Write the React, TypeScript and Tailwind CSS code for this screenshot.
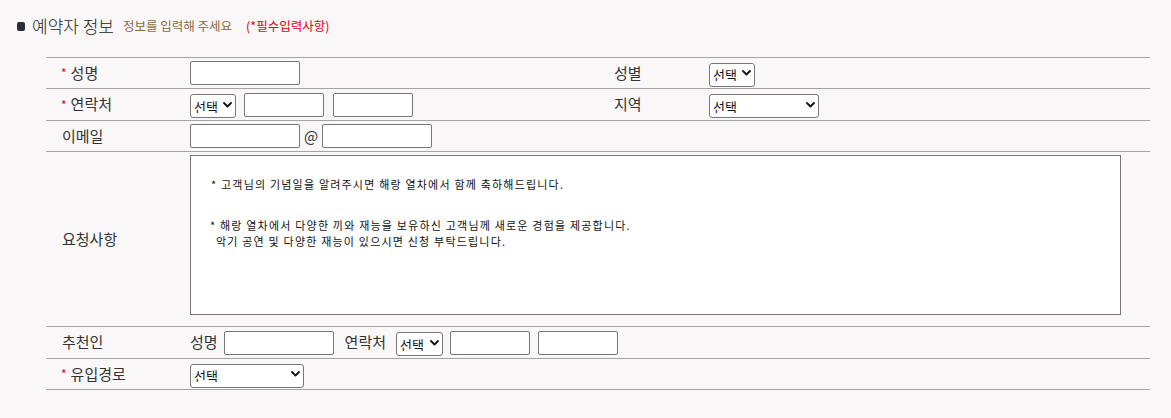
import React from "react";

const FONT = { fontFamily: '"Noto Sans CJK KR", "Noto Sans", sans-serif' };

function Chevron() {
  return (
    <svg width="9" height="6" viewBox="0 0 9 6" className="pointer-events-none absolute right-[4px] top-1/2 -translate-y-1/2">
      <path d="M1 1 L4.5 4.5 L8 1" fill="none" stroke="#111" strokeWidth="1.8" strokeLinecap="round" strokeLinejoin="round" />
    </svg>
  );
}

function Sel({ w }: { w: string }) {
  return (
    <div className={`relative ${w} h-[24px]`}>
      <select
        className="h-full w-full appearance-none rounded-[3px] border border-[#767676] bg-white pl-[3px] text-[13px] leading-none text-[#111] outline-none"
        style={FONT}
        defaultValue="선택"
      >
        <option>선택</option>
      </select>
      <Chevron />
    </div>
  );
}

function Inp({ w }: { w: string }) {
  return <input type="text" className={`${w} h-[24px] rounded-[2px] border border-[#767676] bg-white outline-none`} />;
}

function Label({ req, children }: { req?: boolean; children: React.ReactNode }) {
  return (
    <div className="flex w-[144px] shrink-0 items-center pl-[15px] text-[15px] text-[#333]">
      {req ? <span className="mr-[4px] text-[12px] text-[#e60012]">*</span> : <span className="ml-[1px]" />}
      <span>{children}</span>
    </div>
  );
}

export default function App() {
  return (
    <div className="min-h-[418px] w-full bg-[#f9f7f8] text-[#333]" style={FONT}>
      <div className="flex items-center pl-[17px] pt-[13px]">
        <span className="mr-[7px] h-[9px] w-[8px] rounded-[2px] bg-[#2a2e33]" />
        <span className="text-[17px] font-light leading-[26px] text-[#222]">예약자 정보</span>
        <span className="ml-[9px] text-[12.5px] text-[#8b6a3b]">정보를 입력해 주세요</span>
        <span className="ml-[14px] text-[12.5px] text-[#e8000b]">(*필수입력사항)</span>
      </div>

      <div className="ml-[46px] mt-[18px] w-[1104px] border-t border-[#a3a3a3]">
        {/* row 1 */}
        <div className="flex h-[31px] items-center border-b border-[#a3a3a3]">
          <Label req>성명</Label>
          <div className="flex w-[424px] items-center">
            <Inp w="w-[110px]" />
          </div>
          <div className="w-[95px] text-[15px] text-[#333]">성별</div>
          <Sel w="w-[46px]" />
        </div>
        {/* row 2 */}
        <div className="flex h-[32px] items-center border-b border-[#a3a3a3]">
          <Label req>연락처</Label>
          <div className="flex w-[424px] items-center">
            <Sel w="w-[46px]" />
            <div className="ml-[8px]"><Inp w="w-[80px]" /></div>
            <div className="ml-[9px]"><Inp w="w-[80px]" /></div>
          </div>
          <div className="w-[95px] text-[15px] text-[#333]">지역</div>
          <Sel w="w-[110px]" />
        </div>
        {/* row 3 */}
        <div className="flex h-[31px] items-center border-b border-[#a3a3a3]">
          <Label>이메일</Label>
          <div className="flex items-center">
            <Inp w="w-[110px]" />
            <span className="ml-[4px] mr-[4px] text-[15px] text-[#333]">@</span>
            <Inp w="w-[110px]" />
          </div>
        </div>
        {/* row 4 */}
        <div className="flex h-[175px] border-b border-[#a3a3a3]">
          <Label>요청사항</Label>
          <div className="pt-[3px]">
            <div className="h-[160px] w-[931px] border border-[#767676] bg-white pl-[19px] pt-[20px] text-[11px] leading-[16px] tracking-[1.2px] text-[#111]">
              <div className="pl-[1px]">* 고객님의 기념일을 알려주시면 해랑 열차에서 함께 축하해드립니다.</div>
              <div className="mt-[25px]">* 해랑 열차에서 다양한 끼와 재능을 보유하신 고객님께 새로운 경험을 제공합니다.</div>
              <div className="pl-[6px]">악기 공연 및 다양한 재능이 있으시면 신청 부탁드립니다.</div>
            </div>
          </div>
        </div>
        {/* row 5 */}
        <div className="flex h-[32px] items-center border-b border-[#a3a3a3]">
          <Label>추천인</Label>
          <div className="flex items-center">
            <span className="text-[15px] text-[#333]">성명</span>
            <div className="ml-[6px]"><Inp w="w-[110px]" /></div>
            <span className="ml-[11px] text-[15px] text-[#333]">연락처</span>
            <div className="ml-[10px]"><Sel w="w-[47px]" /></div>
            <div className="ml-[7px]"><Inp w="w-[80px]" /></div>
            <div className="ml-[8px]"><Inp w="w-[80px]" /></div>
          </div>
        </div>
        {/* row 6 */}
        <div className="flex h-[31px] items-center border-b border-[#a3a3a3]">
          <Label req>유입경로</Label>
          <Sel w="w-[114px]" />
        </div>
      </div>
    </div>
  );
}
